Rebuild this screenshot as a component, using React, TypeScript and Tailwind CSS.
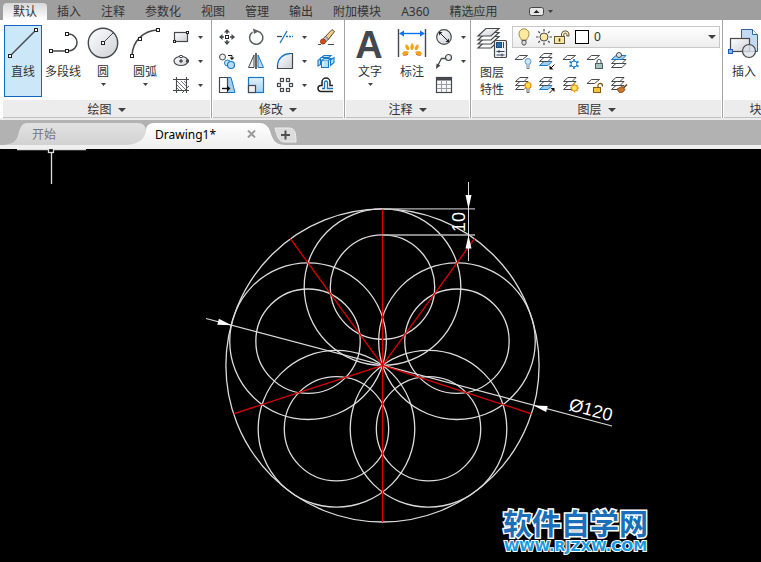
import type { ReactNode } from "react";
import clsx from "clsx";

const MENU = ["默认", "插入", "注释", "参数化", "视图", "管理", "输出", "附加模块", "A360", "精选应用"];

const INK = "#45484d";
const BLUE = "#1778c8";

function Svg({ w = 18, h = 18, children }: { w?: number; h?: number; children: ReactNode }) {
  return (
    <svg
      width={w}
      height={h}
      viewBox={`0 0 ${w} ${h}`}
      fill="none"
      stroke={INK}
      className="block shrink-0 overflow-visible"
      aria-hidden="true"
    >
      {children}
    </svg>
  );
}

function Caret({ big = false }: { big?: boolean }) {
  return big ? (
    <svg width="8" height="4" viewBox="0 0 8 4" className="block shrink-0" aria-hidden="true">
      <path d="M0 0h8L4 4z" fill="#404040" />
    </svg>
  ) : (
    <svg width="5" height="3" viewBox="0 0 5 3" className="block shrink-0" aria-hidden="true">
      <path d="M0 0h5L2.5 3z" fill="#404040" />
    </svg>
  );
}

// Degradados compartidos por todos los iconos
function Gradients() {
  return (
    <svg width="0" height="0" className="absolute" aria-hidden="true">
      <defs>
        <linearGradient id="gris" x1="0" y1="0" x2="1" y2="1">
          <stop offset="0" stopColor="#ffffff" />
          <stop offset="1" stopColor="#cdd0d6" />
        </linearGradient>
        <linearGradient id="azul" x1="0" y1="0" x2="0" y2="1">
          <stop offset="0" stopColor="#e4f3fc" />
          <stop offset="1" stopColor="#9fd0f0" />
        </linearGradient>
        <linearGradient id="tab" x1="0" y1="0" x2="0" y2="1">
          <stop offset="0" stopColor="#e2e2e2" />
          <stop offset="1" stopColor="#d2d2d2" />
        </linearGradient>
        <linearGradient id="tabActiva" x1="0" y1="0" x2="0" y2="1">
          <stop offset="0" stopColor="#ffffff" />
          <stop offset="1" stopColor="#f0f0f0" />
        </linearGradient>
      </defs>
    </svg>
  );
}

/* ---------- iconos grandes (32x32) ---------- */

const LineIcon = () => (
  <Svg w={32} h={32}>
    <path d="M4 28 29 3" strokeWidth="1.5" />
    <g fill="#fff" stroke="#222">
      <rect x="1.5" y="27.5" width="3" height="3" />
      <rect x="27.5" y="1.5" width="3" height="3" />
    </g>
  </Svg>
);

const PolylineIcon = () => (
  <Svg w={32} h={32}>
    <path d="M4 24h17c12 0 12-17 0-17" strokeWidth="1.5" />
    <g fill="#fff" stroke="#222">
      <rect x="2.5" y="22.5" width="3" height="3" />
      <rect x="18.5" y="22.5" width="3" height="3" />
      <rect x="18.5" y="5.5" width="3" height="3" />
    </g>
  </Svg>
);

const CircleIcon = () => (
  <Svg w={32} h={32}>
    <circle cx="16" cy="16" r="14.7" fill="url(#gris)" strokeWidth="1.4" />
    <path d="M16 16 26 6" />
    <rect x="14.5" y="14.5" width="3" height="3" fill="#fff" stroke="#222" />
  </Svg>
);

const ArcIcon = () => (
  <Svg w={32} h={32}>
    <path d="M3 28C4 14 14 4 28 3" strokeWidth="1.5" />
    <g fill="#fff" stroke="#222">
      <rect x="1.5" y="27.5" width="3" height="3" />
      <rect x="9.5" y="10.5" width="3" height="3" />
      <rect x="27.5" y="1.5" width="3" height="3" />
    </g>
  </Svg>
);

const TextIcon = () => (
  <Svg w={32} h={32}>
    <text
      x="15"
      y="31"
      textAnchor="middle"
      fill="#44484e"
      stroke="none"
      className="font-['Liberation_Sans',Arial,sans-serif] text-[38px] font-bold"
    >
      A
    </text>
  </Svg>
);

const DimensionIcon = () => (
  <Svg w={32} h={32}>
    <path d="M2.500 2v28M29.500 2v28" strokeWidth="1.400" />
    <path d="M5 6.500h22" stroke="#0a72f0" strokeWidth="1.400" />
    <path d="M3 6.500l5-3v6zM29 6.500l-5-3v6z" fill="#0a72f0" stroke="none" />
    <g stroke="none" fill="#f5a21c">
      <path d="M15.500 23c-2.500-3 0-6 .500-7 2.500 2 2.500 5 .500 7z" />
      <path d="M11 23c-2-2-2-4-1-6 3 2 4 4 3 6z" />
      <path d="M21 23c2-2 2-4 1-6-3 2-4 4-3 6z" />
      <path d="M6 27c1-3 3-4 7-2-1 3-4 4-7 2z" />
      <path d="M26 27c-1-3-3-4-7-2 1 3 4 4 7 2z" />
    </g>
    <path d="M7 28c2 1 4 0 5-1M25 28c-2 1-4 0-5-1" stroke="#d9661a" />
  </Svg>
);

const LayerPropsIcon = () => (
  <Svg w={32} h={32}>
    <g strokeWidth="1.200" fill="#fff">
      <path d="M10 13.500h13l-8 7.500H2z" />
      <path d="M10 9.500h13l-8 7.500H2z" />
      <path d="M10 5.500h13l-8 7.500H2z" />
      <path d="M10 1.500h13l-8 7.500H2z" fill="url(#gris)" />
    </g>
    <rect x="18.500" y="13.500" width="12" height="17" rx="1" fill="#f1f4f8" strokeWidth="1.200" />
    <rect x="20.500" y="15.500" width="5" height="5" fill="#2a6eb0" stroke="#1b4c80" />
    <path d="M27.500 15v6M20.500 24.500h8M20.500 28h8M23 23v3M26 26.500v3" stroke="#30435a" />
  </Svg>
);

const InsertIcon = () => (
  <Svg w={32} h={32}>
    <path d="M13.500 2.500h11l5 5v17h-16z" fill="#c3daf2" stroke="#32659c" />
    <path d="M24.500 2.500v5h5" fill="#fff" stroke="#32659c" />
    <rect x="2.500" y="11.500" width="19" height="13" fill="url(#gris)" strokeWidth="1.200" />
    <circle cx="21" cy="24" r="6.500" fill="#dfe2e7" fillOpacity=".8" strokeWidth="1.200" />
    <rect x=".500" y="22.500" width="4" height="4" fill="#7eb3ee" stroke="#1f5fae" />
  </Svg>
);

/* ---------- iconos pequeños (18x18) ---------- */

const RectIcon = () => (
  <Svg>
    <rect x="2.500" y="4.500" width="13" height="9" fill="url(#gris)" strokeWidth="1.200" />
    <rect x="1.500" y="12.500" width="2" height="2" fill="#fff" stroke="#222" />
    <rect x="14.500" y="3.500" width="2" height="2" fill="#fff" stroke="#222" />
  </Svg>
);

const EllipseIcon = () => (
  <Svg>
    <ellipse cx="9" cy="9" rx="7" ry="4.500" fill="url(#gris)" strokeWidth="1.200" />
    <path d="M9 7v4M7 9h4" stroke="#222" />
    <rect x="8" y="3.500" width="2" height="2" fill="#fff" />
    <rect x="14.500" y="8" width="2" height="2" fill="#fff" />
  </Svg>
);

const HatchIcon = () => (
  <Svg>
    <path d="M4.500 1v16M14.500 1v16M1 3.500h16M1 14.500h16" strokeWidth="1.100" />
    <path d="M5 5l9 9M5 9l5 5M9 5l5 5M5 12l2 2M12 5l2 2" stroke="#777" />
    <path d="M10 17l7-7" stroke="#555" />
  </Svg>
);

const MoveIcon = () => (
  <Svg>
    <path d="M9 1l3 3.500H6zM9 17l3-3.500H6zM1 9l3.500-3v6zM17 9l-3.500-3v6z" fill={INK} stroke="none" />
    <path d="M9 4v2M9 12v2M4 9h2M12 9h2" strokeWidth="1.400" />
    <rect x="7.500" y="7.500" width="3" height="3" stroke="#222" />
  </Svg>
);

const RotateIcon = () => (
  <Svg>
    <path d="M5.500 4.200a6.600 6.600 0 1 0 5-1" stroke="#5c6066" strokeWidth="1.500" />
    <path d="M6 .500l6 2.500-5 3z" fill="#5c6066" stroke="none" />
  </Svg>
);

const TrimIcon = () => (
  <Svg>
    <path d="M1 8.500h5" strokeWidth="1.300" />
    <path d="M4 15 11 3" stroke={BLUE} strokeWidth="1.300" />
    <path d="M10 8.500h7" stroke={BLUE} strokeWidth="1.300" strokeDasharray="2 1" />
  </Svg>
);

const EraseIcon = () => (
  <Svg>
    <path d="M1 16.500h3M11 16.500h6" />
    <path d="M8 9 15 1.500 17.500 3.500 11 12z" fill="#f1cf8a" stroke="#5e4524" />
    <path d="M6 11l2.500-3 3 3-2.500 3z" fill="#b8bcc2" stroke="#555" strokeWidth=".8" />
    <circle cx="6" cy="13.500" r="2.600" fill="#d94d1c" stroke="#8c2f10" strokeWidth=".8" />
  </Svg>
);

const CopyIcon = () => (
  <Svg>
    <circle cx="4.500" cy="5" r="3" fill="#eceef1" />
    <circle cx="9.500" cy="11" r="3" fill="#d4eafa" stroke={BLUE} />
    <circle cx="13" cy="13" r="3.500" fill="#b9dcf5" stroke={BLUE} strokeWidth="1.200" />
    <path d="M10 3.500h4v2" stroke="#111" />
    <path d="M11.500 5.500h5L14 8z" fill="#111" stroke="none" />
  </Svg>
);

const MirrorIcon = () => (
  <Svg>
    <path d="M7 3v12.500H1.500z" fill="#eef0f2" />
    <path d="M11 3v12.500h5.500z" fill="#b9dcf5" stroke={BLUE} />
    <path d="M9 1v16" stroke="#111" strokeWidth="1.300" />
  </Svg>
);

const FilletIcon = () => (
  <Svg>
    <path d="M1.500 16.500V15C2 7 7 2 14.500 1.500h2v15z" fill="url(#gris)" stroke="none" />
    <path d="M1.500 13v3.500h15v-15H14" strokeWidth="1.200" />
    <path d="M1.500 13C2 6.500 7 2 14 1.500" stroke={BLUE} strokeWidth="1.300" />
  </Svg>
);

const ExplodeIcon = () => (
  <Svg>
    <g fill="#b9e0f7" stroke={BLUE} strokeWidth="1.100">
      <path d="M4.500 5.500 7 3.500h7l-2 2z" />
      <path d="M4.500 8.500h7v7h-7z" />
      <path d="M1 8.500l2.500-2v6L1 14z" />
      <path d="M13.500 8 17 5.500v5l-3.500 3z" />
      <path d="M4.500 8.500 7 6.500h7l-2.500 2" />
    </g>
    <path d="M6 10v4" stroke="#fff" />
  </Svg>
);

const StretchIcon = () => (
  <Svg>
    <path d="M9 1.500h4l4 15H9z" fill="#9fd0f0" stroke={BLUE} />
    <path d="M1.500 1.500h8v15h-8z" fill="#fff" strokeWidth="1.200" />
    <path d="M4 12.500h6" stroke="#111" strokeWidth="1.400" />
    <path d="M9 9.500l3.500 3L9 15.500z" fill="#111" stroke="none" />
  </Svg>
);

const ScaleIcon = () => (
  <Svg>
    <rect x="1.500" y="1.500" width="15" height="15" fill="url(#azul)" stroke={BLUE} strokeWidth="1.200" />
    <rect x="1.500" y="9.500" width="7" height="7" fill="#eceef1" strokeWidth="1.200" />
  </Svg>
);

const ArrayIcon = () => (
  <Svg>
    <g fill="#fff" strokeWidth="1.200">
      <rect x="4.500" y="2.500" width="3" height="3" />
      <rect x="10.500" y="2.500" width="3" height="3" />
      <rect x="1.500" y="7.500" width="3" height="3" />
      <rect x="13.500" y="7.500" width="3" height="3" />
      <rect x="4.500" y="12.500" width="3" height="3" />
      <rect x="10.500" y="12.500" width="3" height="3" />
    </g>
  </Svg>
);

const OffsetIcon = () => (
  <Svg>
    <path d="M16 9.500h-3V6a4 4 0 0 0-8 0v3.500H4a3 3 0 0 0 0 6h12" stroke="#222" strokeWidth="1.500" />
    <path d="M16 12.500h-5.500V6.500a1.500 1.500 0 0 0-3 0v6H5" stroke={BLUE} strokeWidth="1.300" />
  </Svg>
);

const DiameterIcon = () => (
  <Svg>
    <circle cx="9" cy="9" r="7.300" fill="url(#gris)" strokeWidth="1.200" />
    <path d="M5 5l8 8" stroke="#222" />
    <path d="M4 4h3.500L4 7.500zM14 14h-3.500L14 10.500z" fill="#222" stroke="none" />
  </Svg>
);

const LeaderIcon = () => (
  <Svg>
    <path d="M2.500 14 6.500 6.500h4" strokeWidth="1.300" />
    <circle cx="13.500" cy="5.500" r="3" fill="#eceef1" strokeWidth="1.200" />
    <path d="M1 17l.500-5.500 4 2z" fill={INK} stroke="none" />
  </Svg>
);

const TableIcon = () => (
  <Svg>
    <rect x="1.500" y="1.500" width="15" height="15" fill="#f8f8f8" strokeWidth="1.200" />
    <path d="M1 3h16" strokeWidth="3" />
    <path d="M2 8.500h14M2 12.500h14M6.500 5v11M11.500 5v11" stroke="#9a9da3" />
  </Svg>
);

const OneLayer = () => <path d="M5.500 3.500h8l-5 4H1z" fill="#fff" />;

const Stack = ({ blue }: { blue?: boolean }) => (
  <g fill="#fff">
    <path d="M6 9.500h8l-4 4H1.500z" fill={blue ? "#9bd0f2" : "#fff"} stroke={blue ? BLUE : INK} />
    <path d="M6 5.500h8l-4 4H1.500z" />
    <path d="M6 1.500h8l-4 4H1.500z" />
  </g>
);

const layerTools: { name: string; icon: ReactNode }[] = [
  {
    name: "关",
    icon: (
      <Svg>
        <OneLayer />
        <circle cx="14" cy="9.500" r="3" fill="#cfe5fa" stroke="#5b97d6" />
        <path d="M13 12.500v4h2v-4" fill="#fff" stroke="#6580a0" />
      </Svg>
    ),
  },
  {
    name: "隔离",
    icon: (
      <Svg>
        <Stack blue />
        <path d="M16.500 12.500 13 16" stroke="#111" />
        <path d="M11.500 13.500v4h4z" fill="#111" stroke="none" />
      </Svg>
    ),
  },
  {
    name: "冻结",
    icon: (
      <Svg>
        <OneLayer />
        <path d="M12 7v10M7.500 9.500l9 5M16.500 9.500l-9 5" stroke={BLUE} strokeWidth="1.600" />
        <circle cx="12" cy="12" r="3" fill="#fff" stroke={BLUE} />
      </Svg>
    ),
  },
  {
    name: "锁定",
    icon: (
      <Svg>
        <OneLayer />
        <path d="M11 12V9.500a2 2 0 0 1 4 0V12" strokeWidth="1.200" stroke="#4d6466" />
        <rect x="9.500" y="11.500" width="7" height="5" fill="#a8c2bd" stroke="#4d6466" />
      </Svg>
    ),
  },
  {
    name: "置为当前",
    icon: (
      <Svg>
        <path d="M6 11.500h10l-4 4H1.500z" fill="#fff" />
        <path d="M6 7.500h10l-4 4H1.500z" fill="#fff" />
        <path d="M6 3.500h10l-4 4H1.500z" fill="#9bd0f2" stroke={BLUE} />
        <circle cx="9" cy="3" r="2.500" fill="#e3e6ea" />
      </Svg>
    ),
  },
  {
    name: "打开所有图层",
    icon: (
      <Svg>
        <Stack />
        <circle cx="14" cy="9.500" r="3" fill="#ffe04a" stroke="#f08a12" strokeWidth="1.200" />
        <path d="M13 12.500v4h2v-4" fill="#fff" stroke="#666" />
      </Svg>
    ),
  },
  {
    name: "取消隔离",
    icon: (
      <Svg>
        <Stack blue />
        <path d="M11.500 17 15 13.500" stroke="#111" />
        <path d="M12.500 12h4v4z" fill="#111" stroke="none" />
      </Svg>
    ),
  },
  {
    name: "解冻所有图层",
    icon: (
      <Svg>
        <Stack />
        <path d="M12.500 7.500v9M8 12h9M9.300 8.800l6.400 6.400M15.700 8.800l-6.400 6.400" stroke="#f08a12" strokeWidth="1.200" />
        <circle cx="12.500" cy="12" r="3" fill="#ffe866" stroke="#f08a12" />
      </Svg>
    ),
  },
  {
    name: "解锁",
    icon: (
      <Svg>
        <OneLayer />
        <path d="M12 12V9.500a2.200 2.200 0 0 1 4.400 0v1" strokeWidth="1.200" stroke="#7a4e10" />
        <rect x="7.500" y="11.500" width="7" height="5" fill="#f6c33c" stroke="#8a5a10" />
      </Svg>
    ),
  },
  {
    name: "匹配图层",
    icon: (
      <Svg>
        <Stack />
        <path d="M17 8.500l-3.500 3.500" stroke="#5e3a14" strokeWidth="1.500" />
        <path d="M7 13l5-2.500 3 3c-1.500 3-4 3.500-5.500 3z" fill="#c9772a" stroke="#8a4a12" />
      </Svg>
    ),
  },
];

const BulbIcon = () => (
  <Svg>
    <path d="M6.500 12C6 10 4 9 4 5.800a5 5 0 0 1 10 0C14 9 12 10 11.500 12z" fill="#fdeaa0" stroke="#a08a4a" />
    <path d="M7 12.500h4v3l-1 1.500H8l-1-1.500z" fill="#ddd" stroke="#555" />
  </Svg>
);

const SunIcon = () => (
  <Svg>
    <circle cx="9" cy="9" r="4" fill="#fde9a4" />
    <path d="M9 1v2.500M9 14.500V17M1 9h2.500M14.500 9H17M3.300 3.300 5 5M13 13l1.700 1.700M14.700 3.300 13 5M5 13l-1.700 1.700" strokeWidth="1.200" />
  </Svg>
);

const UnlockIcon = () => (
  <Svg>
    <path d="M8.500 9V6a3.800 3.800 0 0 1 7.500 0v2h-2.200V6.200a1.600 1.600 0 0 0-3 0V9" fill="#fff3c4" stroke="#5c5338" />
    <rect x="1.500" y="8.500" width="10" height="7" fill="#fbe7a0" stroke="#5c5338" />
    <path d="M6.500 10.500v3" stroke="#333" strokeWidth="1.500" />
  </Svg>
);

/* ---------- piezas de la cinta ---------- */

function BigButton({
  label,
  icon,
  caret,
  active,
  className,
}: {
  label: string;
  icon: ReactNode;
  caret?: boolean;
  active?: boolean;
  className?: string;
}) {
  return (
    <button
      type="button"
      className={clsx(
        "flex h-[72px] shrink-0 flex-col items-center border pt-px leading-4",
        active ? "border-[#1169bd] bg-[#cce8f8]" : "border-transparent",
        className
      )}
    >
      {icon}
      <span className="mt-[5px] whitespace-nowrap">{label}</span>
      {caret && (
        <span className="mt-[3px]">
          <Caret />
        </span>
      )}
    </button>
  );
}

function Tool({ name, icon, caret }: { name: string; icon: ReactNode; caret?: boolean }) {
  return (
    <button type="button" aria-label={name} className="flex h-6 items-center gap-2">
      {icon}
      {caret && <Caret />}
    </button>
  );
}

function Panel({ title, className, children }: { title: string; className?: string; children: ReactNode }) {
  return (
    <section className={clsx("flex shrink-0 flex-col border-r border-[#a3a3a3]", className)}>
      <div className="flex h-20 items-start pt-[5px]">{children}</div>
      <button
        type="button"
        className="mx-px flex h-[18px] items-center justify-center gap-[6px] border-b border-[#c0c0c0] bg-[#ececec] pt-[2px] leading-4"
      >
        {title}
        <Caret big />
      </button>
    </section>
  );
}

function Ribbon() {
  return (
    <div className="flex overflow-hidden border-b-2 border-[#ececec] bg-white pl-[2px]">
      <Panel title="绘图" className="w-[210px]">
        <BigButton label="直线" icon={<LineIcon />} active className="ml-[2px] w-[38px]" />
        <BigButton label="多段线" icon={<PolylineIcon />} className="w-[42px]" />
        <BigButton label="圆" icon={<CircleIcon />} caret className="w-[38px]" />
        <BigButton label="圆弧" icon={<ArcIcon />} caret className="w-[46px]" />
        <div className="ml-1 flex flex-col">
          <Tool name="矩形" icon={<RectIcon />} caret />
          <Tool name="椭圆" icon={<EllipseIcon />} caret />
          <Tool name="图案填充" icon={<HatchIcon />} caret />
        </div>
      </Panel>

      <Panel title="修改" className="w-[133px]">
        <div className="ml-[6px] grid grid-cols-[29px_29px_41px_18px]">
          <Tool name="移动" icon={<MoveIcon />} />
          <Tool name="旋转" icon={<RotateIcon />} />
          <Tool name="修剪" icon={<TrimIcon />} caret />
          <Tool name="删除" icon={<EraseIcon />} />
          <Tool name="复制" icon={<CopyIcon />} />
          <Tool name="镜像" icon={<MirrorIcon />} />
          <Tool name="圆角" icon={<FilletIcon />} caret />
          <Tool name="分解" icon={<ExplodeIcon />} />
          <Tool name="拉伸" icon={<StretchIcon />} />
          <Tool name="缩放" icon={<ScaleIcon />} />
          <Tool name="阵列" icon={<ArrayIcon />} caret />
          <Tool name="偏移" icon={<OffsetIcon />} />
        </div>
      </Panel>

      <Panel title="注释" className="w-[126px]">
        <BigButton label="文字" icon={<TextIcon />} caret className="ml-1 w-[42px]" />
        <BigButton label="标注" icon={<DimensionIcon />} className="w-[42px]" />
        <div className="ml-[2px] flex flex-col">
          <Tool name="直径" icon={<DiameterIcon />} caret />
          <Tool name="引线" icon={<LeaderIcon />} caret />
          <Tool name="表格" icon={<TableIcon />} />
        </div>
      </Panel>

      <Panel title="图层" className="w-[252px]">
        <button type="button" className="ml-1 flex w-[34px] flex-col items-center pt-[2px] leading-[17px]">
          <LayerPropsIcon />
          <span className="mt-[5px]">
            图层
            <br />
            特性
          </span>
        </button>
        <div className="ml-[3px] flex flex-1 flex-col pr-[2px]">
          <div className="mt-px flex h-[22px] items-center border border-[#c8c8c8] bg-gradient-to-b from-white to-[#ededed] pr-[3px] pl-[2px]">
            <BulbIcon />
            <span className="ml-[2px]">
              <SunIcon />
            </span>
            <UnlockIcon />
            <span className="ml-1 size-[14px] shrink-0 border border-black bg-white" />
            <select aria-label="图层" className="ml-[5px] min-w-0 flex-1 appearance-none bg-transparent leading-4">
              <option>0</option>
            </select>
            <Caret big />
          </div>
          <div className="mt-px ml-[2px] grid grid-cols-[repeat(5,24px)]">
            {layerTools.map((t) => (
              <Tool key={t.name} name={t.name} icon={t.icon} />
            ))}
          </div>
        </div>
      </Panel>

      <Panel title="块" className="w-[80px]">
        <BigButton label="插入" icon={<InsertIcon />} className="w-[42px]" />
      </Panel>
    </div>
  );
}

function DocumentTabs() {
  return (
    <div className="flex h-[29px] items-end border-b-4 border-[#f0f0f0] bg-[#b2b2b2]">
      <div className="relative flex h-[22px] w-[146px] shrink-0 items-center pl-8">
        <svg width="160" height="22" viewBox="0 0 160 22" className="absolute top-0 left-0" aria-hidden="true">
          <path d="M0 22C20 22 17 12 20 6Q22 0 27 0H138Q145 0 146 7V22Z" fill="url(#tab)" />
        </svg>
        <button type="button" className="relative pt-px leading-4 text-[#777]">
          开始
        </button>
      </div>
      <div className="relative flex h-[22px] w-[128px] shrink-0 items-center pl-[9px]">
        <svg width="160" height="22" viewBox="0 0 160 22" className="absolute top-0 -left-5" aria-hidden="true">
          <path d="M0 22C14 21 19 15 20 8Q20 0 28 0H134Q141 0 144 8C147 17 149 22 160 22Z" fill="url(#tabActiva)" />
        </svg>
        <button type="button" className="relative pt-px leading-4 text-black">
          Drawing1*
        </button>
        <button type="button" aria-label="关闭" className="relative mr-[18px] ml-auto">
          <svg width="9" height="8" viewBox="0 0 9 8" className="block" aria-hidden="true">
            <path d="M1 .5l7 7M8 .5l-7 7" stroke="#9a9a9a" strokeWidth="2" />
          </svg>
        </button>
      </div>
      <button type="button" aria-label="新图形" className="relative mb-[2px]">
        <svg width="24" height="16" viewBox="0 0 24 16" className="block" aria-hidden="true">
          <path d="M1 1h14c6 0 7 5 7 14H10C5 15 3 9 1 1z" fill="#dcdcdc" stroke="#ececec" />
          <path d="M7 8h9M11.500 3.500v9" stroke="#505050" strokeWidth="2" />
        </svg>
      </button>
    </div>
  );
}

/* ---------- dibujo ---------- */

const CX = 382.5;
const CY = 216.4;
const R = 156.6;

// Cinco pétalos a 72°, cada uno con radio R/2; el interior queda 10 unidades más adentro
const petals = [90, 18, -54, -126, 162].map((deg) => {
  const a = (deg * Math.PI) / 180;
  return { x: CX + (R / 2) * Math.cos(a), y: CY - (R / 2) * Math.sin(a) };
});

const axes = [90, 54, -18, -90, -162, 126].map((deg) => {
  const a = (deg * Math.PI) / 180;
  return { x: CX + R * Math.cos(a), y: CY - R * Math.sin(a) };
});

function Drawing() {
  return (
    <svg viewBox="0 0 761 413" className="block w-full" fill="none" stroke="#dcdcdc" strokeWidth="1.3">
      <path d="M17 .5h69" />
      <rect x="48.500" y="-.500" width="5" height="4" fill="#000" />
      <path d="M51.500 4v31" />

      <circle cx={CX} cy={CY} r={R} />
      {petals.map((p) => (
        <g key={`${p.x}`}>
          <circle cx={p.x} cy={p.y} r={R / 2} />
          <circle cx={p.x} cy={p.y} r={R / 3} />
        </g>
      ))}

      <path d="M206 169.500 612 277" strokeWidth="1.200" />
      <path d="M231.500 176.200l-14.200-.500 1.600-6zM533.500 256.400l14.200.600-1.600 6z" fill="#fff" stroke="none" />

      {axes.map((p) => (
        <line key={`${p.x},${p.y}`} x1={CX} y1={CY} x2={p.x} y2={p.y} stroke="#e00000" />
      ))}

      <path d="M382 59.800h93M382 86h93" stroke="#b4b4b4" />
      <path d="M468.500 33v79" strokeWidth="1" />
      <path d="M468.500 60l-3-14h6zM468.500 86l-3 13.500h6z" fill="#fff" stroke="none" />

      <g fill="#fff" stroke="none" className="font-['Liberation_Sans',Arial,sans-serif] text-[18px]">
        <text transform="translate(465 83) rotate(-90)">10</text>
        <text transform="translate(568 261) rotate(14.8)">Ø120</text>
      </g>
    </svg>
  );
}

function Watermark() {
  return (
    <a
      href="#"
      className="absolute right-[113px] bottom-[9px] flex flex-col items-center font-bold whitespace-nowrap text-[#1a6fb8] [-webkit-text-stroke:3px_white] [paint-order:stroke_fill]"
    >
      <span className="text-[29px] leading-[30px]">软件自学网</span>
      <span className="font-['DejaVu_Sans',sans-serif] text-[14px] leading-[14px] text-[#1b9ae0] [-webkit-text-stroke:2px_white]">
        WWW.RJZXW.COM
      </span>
    </a>
  );
}

export default function App() {
  return (
    <div className="flex min-h-screen flex-col bg-black font-['Noto_Sans','Noto_Sans_CJK_SC',sans-serif] text-[12px] text-[#333]">
      <Gradients />
      <nav className="flex h-5 items-end overflow-hidden bg-[#9f9f9f] pl-[3px]">
        {MENU.map((item, i) => (
          <button
            key={item}
            type="button"
            className={clsx(
              "h-[17px] shrink-0 px-[10px] pt-px leading-4 whitespace-nowrap",
              i === 0 && "rounded-t-sm bg-gradient-to-b from-[#d8d8d8] to-white"
            )}
          >
            {item}
          </button>
        ))}
        <button type="button" aria-label="最小化功能区" className="ml-[22px] flex h-[17px] items-center gap-1">
          <svg width="15" height="9" viewBox="0 0 15 9" aria-hidden="true">
            <rect x=".5" y=".5" width="14" height="8" rx="2" fill="#e6e6e6" stroke="#444" />
            <path d="M7.500 3 10.500 6h-6z" fill="#222" />
          </svg>
          <Caret />
        </button>
      </nav>
      <Ribbon />
      <DocumentTabs />
      <main className="relative flex-1">
        <Drawing />
        <Watermark />
      </main>
    </div>
  );
}
